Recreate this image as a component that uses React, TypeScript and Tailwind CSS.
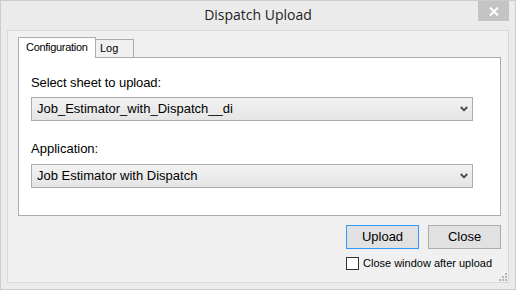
import React from "react";

const sans = "font-['Liberation_Sans',Arial,sans-serif]";

function Combo({ text }: { text: string }) {
  return (
    <div className="flex h-[24px] w-[442px] items-center border border-[#acacac] bg-gradient-to-b from-[#f2f2f2] to-[#e5e5e5] pl-[5px] pr-[4px]">
      <span className="flex-1 text-[13px] leading-[22px] text-black">{text}</span>
      <svg width="8" height="6" viewBox="0 0 8 6">
        <polyline points="0.8,1 4,4.3 7.2,1" fill="none" stroke="#444" strokeWidth="1.8" />
      </svg>
    </div>
  );
}

export default function App() {
  return (
    <div className={`relative flex h-[290px] w-[516px] flex-col border border-[#cdcdcd] bg-[#ebebeb] ${sans}`}>
      <div className="flex h-[29px] justify-center pt-[4px]">
        <span className="font-['Open_Sans',sans-serif] text-[14px] leading-[20px] text-[#1e1e1e]">Dispatch Upload</span>
      </div>
      <div className="absolute right-[6px] top-0 flex h-[20px] w-[31px] items-center justify-center bg-[#c4c4c4]">
        <svg width="10" height="9" viewBox="0 0 10 9">
          <line x1="1" y1="0.5" x2="9" y2="8.5" stroke="white" strokeWidth="2" />
          <line x1="9" y1="0.5" x2="1" y2="8.5" stroke="white" strokeWidth="2" />
        </svg>
      </div>

      <div className="mx-[6px] mb-[6px] flex flex-1 flex-col border border-[#d9d9d9] bg-[#f0f0f0] pl-[10px] pt-[6px]">
        <div className="w-[483px]">
          <div className="flex h-[20px] items-end">
            <div className="relative z-10 -mb-px h-[21px] w-[78px] border-l border-r border-t border-[#acacac] bg-white pl-[7px] pt-[3px] text-[11px] leading-[13px] tracking-[-0.3px] text-black">
              Configuration
            </div>
            <div className="h-[18px] w-[38px] border-r border-t border-[#acacac] bg-[#f0f0f0] pl-[4px] pt-[2px] text-[11px] leading-[13px] text-black">
              Log
            </div>
          </div>
          <div className="h-[159px] border border-[#acacac] bg-white pl-[12px] pt-[17px]">
            <div className="text-[13px] leading-[15px] tracking-[-0.1px] text-black">Select sheet to upload:</div>
            <div className="mt-[7px]">
              <Combo text="Job_Estimator_with_Dispatch__di" />
            </div>
            <div className="mt-[20px] text-[13px] leading-[15px] text-black">Application:</div>
            <div className="mt-[8px]">
              <Combo text="Job Estimator with Dispatch" />
            </div>
          </div>
          <div className="mt-[9px] flex justify-end gap-[9px]">
            <button className="h-[24px] w-[73px] border border-[#3399ff] bg-[#e1e1e1] text-[13px] leading-[22px] text-black">
              Upload
            </button>
            <button className="h-[24px] w-[73px] border border-[#adadad] bg-[#e1e1e1] text-[13px] leading-[22px] text-black">
              Close
            </button>
          </div>
          <div className="mt-[8px] flex items-center gap-[4px] pl-[328px]">
            <div className="h-[13px] w-[13px] border border-[#333333] bg-white" />
            <span className="text-[11px] leading-[13px] text-black">Close window after upload</span>
          </div>
        </div>
      </div>

      <svg className="absolute left-[498px] top-[272px]" width="9" height="9" viewBox="0 0 9 9">
        <rect x="6" y="0" width="2" height="2" fill="#b5b5b5" />
        <rect x="3" y="3" width="2" height="2" fill="#b5b5b5" />
        <rect x="6" y="3" width="2" height="2" fill="#b5b5b5" />
        <rect x="0" y="6" width="2" height="2" fill="#b5b5b5" />
        <rect x="3" y="6" width="2" height="2" fill="#b5b5b5" />
        <rect x="6" y="6" width="2" height="2" fill="#b5b5b5" />
      </svg>
    </div>
  );
}
